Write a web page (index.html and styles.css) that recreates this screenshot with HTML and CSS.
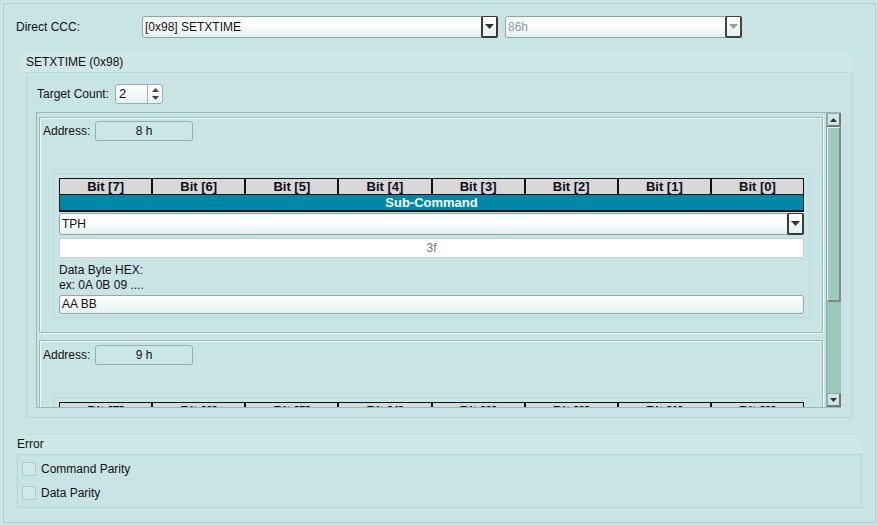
FILE: index.html
```html
<!DOCTYPE html>
<html>
<head>
<meta charset="utf-8">
<link rel="stylesheet" href="styles.css">
</head>
<body>
<div class="window">
  <div class="ccc-row">
    <span class="ccc-label">Direct CCC:</span>
    <div class="combo combo-main">
      <span class="combo-text">[0x98] SETXTIME</span>
      <span class="combo-btn"><svg width="9" height="5" viewBox="0 0 9 5"><path d="M0 0H9L4.5 5Z" fill="#333"/></svg></span>
    </div>
    <div class="combo combo-addr disabled">
      <span class="combo-text">86h</span>
      <span class="combo-btn"><svg width="9" height="5" viewBox="0 0 9 5"><path d="M0 0H9L4.5 5Z" fill="#999"/></svg></span>
    </div>
  </div>

  <div class="group-title">SETXTIME (0x98)</div>
  <div class="group">
    <div class="tc-row">
      <span class="tc-label">Target Count:</span>
      <div class="spin">
        <span class="spin-text">2</span>
        <span class="spin-btns">
          <svg width="7" height="4" viewBox="0 0 7 4"><path d="M0 4H7L3.5 0Z" fill="#444"/></svg>
          <svg width="7" height="4" viewBox="0 0 7 4"><path d="M0 0H7L3.5 4Z" fill="#444"/></svg>
        </span>
      </div>
    </div>

    <div class="scroller">
      <div class="viewport">
        <div class="panel">
          <div class="addr-row">
            <span class="addr-label">Address:</span>
            <div class="addr-field">8 h</div>
          </div>
          <div class="bits-group">
            <div class="bits">
              <div class="bit">Bit [7]</div><div class="bit">Bit [6]</div><div class="bit">Bit [5]</div><div class="bit">Bit [4]</div><div class="bit">Bit [3]</div><div class="bit">Bit [2]</div><div class="bit">Bit [1]</div><div class="bit">Bit [0]</div>
            </div>
            <div class="subcmd">Sub-Command</div>
            <div class="combo combo-tph">
              <span class="combo-text">TPH</span>
              <span class="combo-btn"><svg width="9" height="5" viewBox="0 0 9 5"><path d="M0 0H9L4.5 5Z" fill="#333"/></svg></span>
            </div>
            <div class="value-field">3f</div>
            <div class="hint">Data Byte HEX:<br>ex: 0A 0B 09 ....</div>
            <div class="data-field">AA BB</div>
          </div>
        </div>

        <div class="panel">
          <div class="addr-row addr-row2">
            <span class="addr-label">Address:</span>
            <div class="addr-field">9 h</div>
          </div>
          <div class="bits-group">
            <div class="bits">
              <div class="bit">Bit [7]</div><div class="bit">Bit [6]</div><div class="bit">Bit [5]</div><div class="bit">Bit [4]</div><div class="bit">Bit [3]</div><div class="bit">Bit [2]</div><div class="bit">Bit [1]</div><div class="bit">Bit [0]</div>
            </div>
            <div class="subcmd">Sub-Command</div>
          </div>
        </div>
      </div>
      <div class="vscroll">
        <div class="sb-btn"><svg width="7" height="4" viewBox="0 0 7 4"><path d="M0 4H7L3.5 0Z" fill="#333"/></svg></div>
        <div class="sb-thumb"></div>
        <div class="sb-track"></div>
        <div class="sb-btn"><svg width="7" height="4" viewBox="0 0 7 4"><path d="M0 0H7L3.5 4Z" fill="#333"/></svg></div>
      </div>
    </div>
  </div>

  <div class="error-title">Error</div>
  <div class="error-box">
    <div class="check"><span class="cbox"></span><span>Command Parity</span></div>
    <div class="check"><span class="cbox"></span><span>Data Parity</span></div>
  </div>
</div>
</body>
</html>
```

FILE: styles.css
```css
* { box-sizing: border-box; }
html, body { margin: 0; padding: 0; }
body {
  background: #c9e4e4;
  font-family: "Liberation Sans", Arial, sans-serif;
  font-size: 12px;
  color: #111;
  width: 877px;
  height: 525px;
  overflow: hidden;
}
.window {
  margin: 3px 0 0 3px;
  width: 873px;
  height: 520px;
  border: 1px solid #b2d2d2;
  background: #c9e4e4;
}
.ccc-row {
  display: flex;
  align-items: center;
  margin-top: 12px;
  height: 22px;
  padding-left: 12px;
}
.ccc-label { width: 126px; }

.combo {
  display: flex;
  align-items: center;
  height: 22px;
  border: 1px solid #8fa6a6;
  border-radius: 3px;
  background: linear-gradient(#f4fafa, #ffffff 45%, #e2f0f0);
  position: relative;
}
.combo-text { flex: 1; padding-left: 2px; white-space: nowrap; }
.combo-btn {
  width: 17px;
  height: 22px;
  margin: -1px -1px -1px 0;
  border: 2px solid #3a3a3a;
  border-top-width: 1px;
  border-radius: 2px;
  background: linear-gradient(#ffffff, #e6f1f1);
  display: flex;
  align-items: center;
  justify-content: center;
}
.combo-main { width: 356px; }
.combo-addr { width: 237px; margin-left: 7px; }
.disabled .combo-text { color: #8a9a9a; }
.disabled .combo-btn { border-color: #444; }

.group-title {
  margin: 15px 0 0 16px;
  width: 832px;
  height: 19px;
  line-height: 19px;
  padding-left: 6px;
  background: #cfe7e7;
}
.group {
  margin-left: 22px;
  width: 826px;
  height: 346px;
  border: 1px solid #b7d6d6;
  border-top-color: #bcdada;
}
.tc-row {
  display: flex;
  align-items: center;
  margin-top: 11px;
  padding-left: 10px;
  height: 20px;
}
.tc-label { width: 78px; }
.spin {
  width: 48px;
  height: 20px;
  display: flex;
  border: 1px solid #98b0b0;
  border-radius: 3px;
  background: linear-gradient(#ffffff, #e6f2f2);
}
.spin-text { flex: 1; padding-left: 3px; line-height: 18px; font-size: 13px; }
.spin-btns {
  width: 15px;
  border-left: 1px solid #98b0b0;
  display: flex;
  flex-direction: column;
  align-items: center;
  justify-content: space-evenly;
}

.scroller {
  margin: 8px 0 0 9px;
  width: 805px;
  height: 296px;
  display: flex;
  border: 1px solid #9ab6b6;
  border-right: none;
}
.viewport {
  flex: 1;
  overflow: hidden;
  padding: 4px 0 0 2px;
}
.panel {
  width: 784px;
  border: 1px solid #9db9b9;
  box-shadow: inset 1px 1px 0 #eef8f8, 1px 1px 0 #eef8f8;
  margin-bottom: 7px;
}
.addr-row {
  display: flex;
  align-items: center;
  padding: 3px 0 0 3px;
  height: 23px;
}
.addr-row2 { padding-top: 4px; height: 24px; }
.addr-label { width: 52px; }
.addr-field {
  width: 98px;
  height: 20px;
  border: 1px solid #95adad;
  border-radius: 3px;
  text-align: center;
  line-height: 18px;
  background: #cbe6e6;
}
.bits-group {
  margin: 32px 0 14px 13px;
  width: 757px;
  border: 1px solid #bcdada;
  padding: 4px 5px 3px 5px;
}
.bits {
  display: flex;
  height: 17px;
  border: 1px solid #111;
  background: #d8d8d8;
}
.bit {
  flex: 1;
  text-align: center;
  font-weight: bold;
  font-size: 13px;
  line-height: 15px;
  color: #0d0d1a;
  border-left: 2px solid #111;
}
.bit:first-child { border-left: none; }
.subcmd {
  height: 17px;
  background: #0088a8;
  color: #fff;
  font-weight: bold;
  font-size: 13px;
  text-align: center;
  line-height: 16px;
  border: 1px solid #111;
  border-top: none;
  border-bottom-width: 2px;
}
.combo-tph { margin-top: 1px; }
.value-field {
  margin-top: 3px;
  height: 20px;
  background: #fff;
  border: 1px solid #c4d2d2;
  border-radius: 2px;
  text-align: center;
  line-height: 18px;
  color: #777;
}
.hint {
  margin-top: 5px;
  line-height: 15px;
}
.data-field {
  margin-top: 2px;
  height: 19px;
  border: 1px solid #93aaaa;
  border-radius: 3px;
  background: linear-gradient(#ffffff, #e6f2f2);
  padding-left: 2px;
  line-height: 17px;
}

.vscroll {
  width: 15px;
  display: flex;
  flex-direction: column;
  background: #9ac9b9;
  border-left: 1px solid #8aa;
}
.sb-btn {
  height: 14px;
  background: #cfe6e6;
  border: 1px solid #9aa;
  border-right: 2px solid #777;
  border-bottom: 2px solid #777;
  display: flex;
  align-items: center;
  justify-content: center;
}
.sb-thumb {
  height: 175px;
  background: #9dccbc;
  border-left: 1px solid #e4f2ee;
  border-top: 1px solid #e4f2ee;
  border-right: 2px solid #888;
  border-bottom: 2px solid #888;
}
.sb-track { flex: 1; }

.error-title {
  margin: 17px 0 0 13px;
  width: 845px;
  height: 19px;
  line-height: 19px;
  background: #cde6e6;
}
.error-box {
  margin-left: 13px;
  width: 845px;
  height: 54px;
  border: 1px solid #b7d5d5;
  padding: 7px 0 0 4px;
}
.check {
  display: flex;
  align-items: center;
  height: 14px;
  margin-bottom: 10px;
}
.cbox {
  width: 14px;
  height: 14px;
  border: 1px solid #b0cccc;
  background: #cfe8e8;
  margin-right: 5px;
}
```
